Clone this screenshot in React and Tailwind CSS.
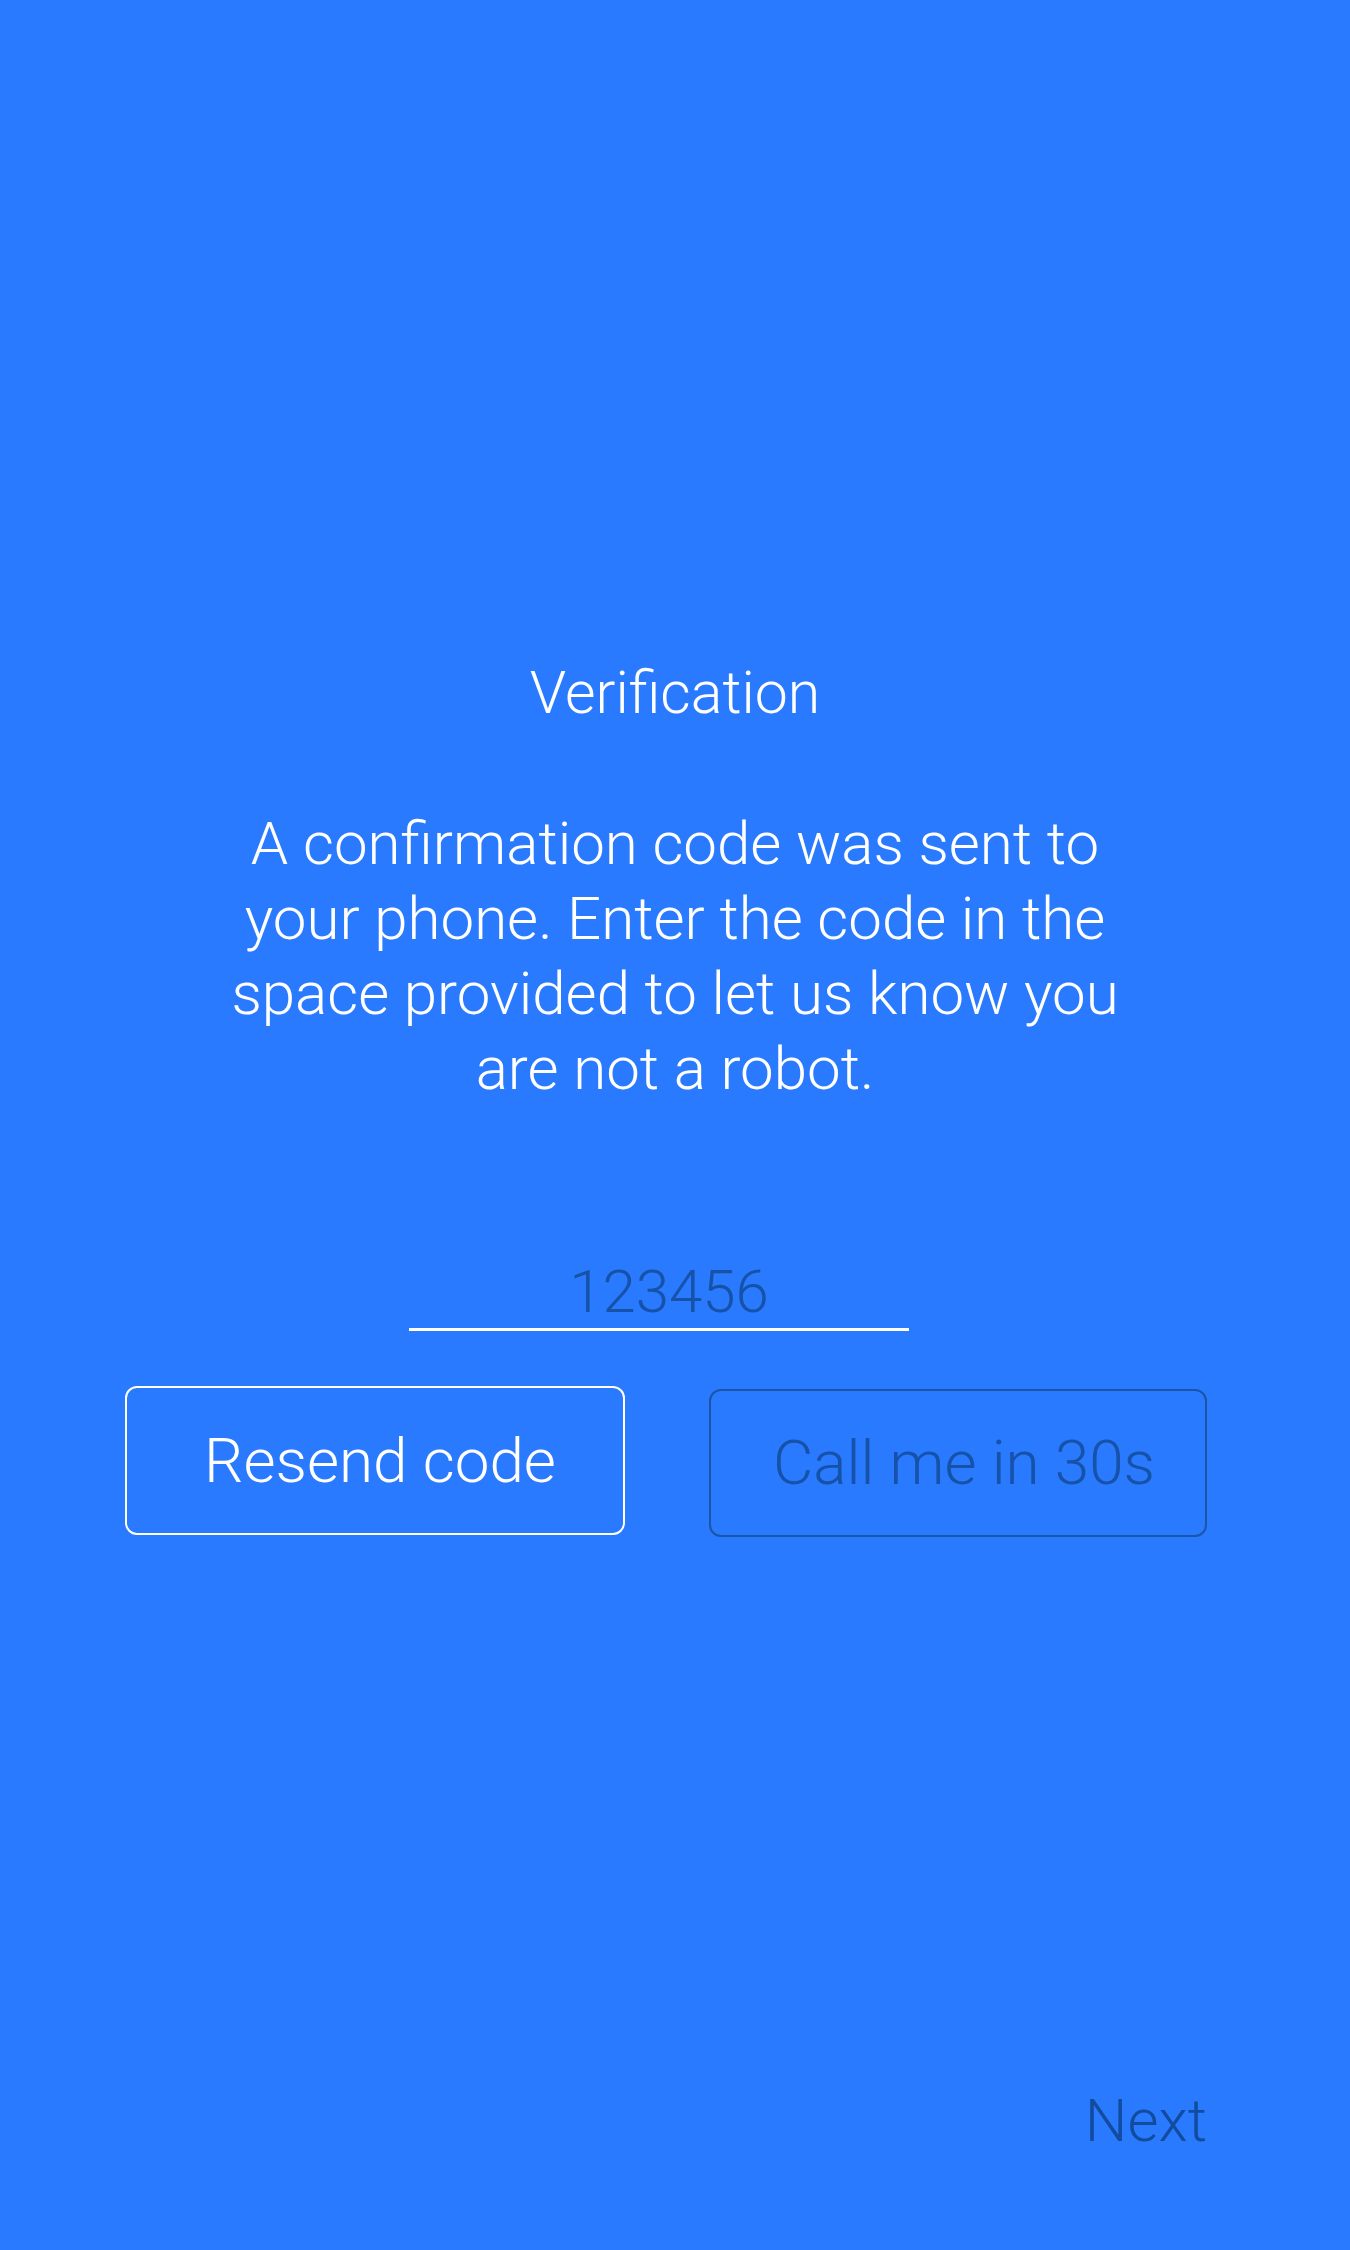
export default function App() {
  const font = { fontFamily: 'Roboto, "Liberation Sans", Arial, sans-serif' };
  return (
    <div
      className="w-[1350px] h-[2250px] bg-[#2a7aff] flex flex-col font-light text-white"
      style={font}
    >
      <div className="pt-[657px] text-center text-[59px] leading-[72px]">Verification</div>
      <div className="mt-[77px] text-center text-[60px] leading-[75px]">
        A confirmation code was sent to
        <br />
        your phone. Enter the code in the
        <br />
        space provided to let us know you
        <br />
        are not a robot.
      </div>
      <div className="mt-[150px] ml-[409px] w-[500px] border-b-[3px] border-white pl-[20px] text-center text-[60px] leading-[72px] text-[#1552a8]">
        123456
      </div>
      <div className="mt-[55px] flex items-start gap-[84px] pl-[125px]">
        <button className="w-[500px] h-[149px] rounded-[12px] border-2 border-white pl-[10px] text-[62px] leading-[72px] text-white font-light">
          Resend code
        </button>
        <button className="mt-[3px] w-[498px] h-[148px] rounded-[12px] border-2 border-[#1a55a8] pl-[12px] text-[62px] leading-[72px] text-[#1552a8] font-light">
          Call me in 30s
        </button>
      </div>
      <div className="mt-auto mb-[93px] flex justify-end pr-[143px]">
        <span className="text-[60px] leading-[72px] text-[#124c9e]">Next</span>
      </div>
    </div>
  );
}
